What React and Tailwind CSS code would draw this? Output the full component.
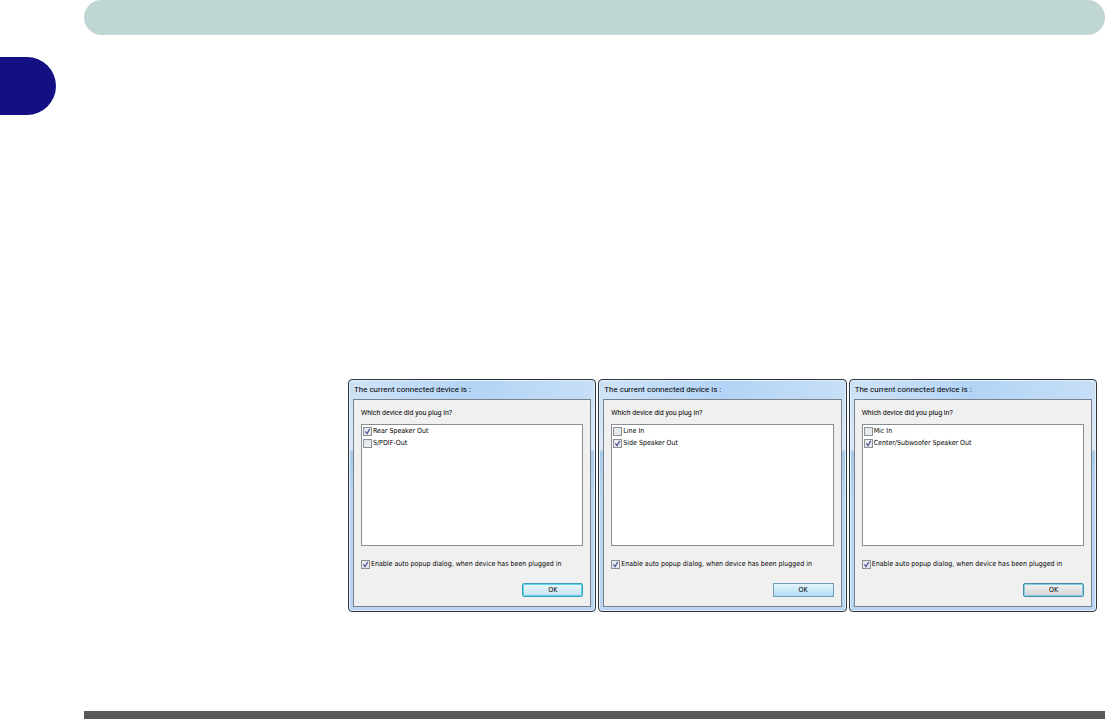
import React from 'react';
import clsx from 'clsx';

const DIALOGS = [
  {
    id: 'rear',
    options: [
      { label: 'Rear Speaker Out', checked: true },
      { label: 'S/PDIF-Out', checked: false },
    ],
    button: 'default',
  },
  {
    id: 'side',
    options: [
      { label: 'Line In', checked: false },
      { label: 'Side Speaker Out', checked: true },
    ],
    button: 'hover',
  },
  {
    id: 'center',
    options: [
      { label: 'Mic In', checked: false },
      { label: 'Center/Subwoofer Speaker Out', checked: true },
    ],
    button: 'focus',
  },
];

const BUTTON_STYLES = {
  default: 'rounded-[2px] border-[#3f9fb8] from-[#eef7fb] to-[#c3e2f1] shadow-[inset_0_0_0_1px_#5fd3f0]',
  hover: 'border-[#6d9db8] from-[#e6f5fd] to-[#b0dcf3]',
  focus: 'rounded-[2px] border-[#4b8ba3] from-[#f2f2f2] to-[#d3d5d6] shadow-[inset_0_0_0_1px_#7fd0e6]',
};

const CheckBox = ({ id, label, defaultChecked }) => (
  <label htmlFor={id} className="flex h-[12px] items-center gap-px whitespace-nowrap">
    <span className="grid shrink-0">
      <input
        id={id}
        type="checkbox"
        defaultChecked={defaultChecked}
        className="peer col-start-1 row-start-1 size-[9px] appearance-none border border-[#8c8f93] bg-[#e6e9ee]"
      />
      <svg
        viewBox="0 0 9 9"
        className="pointer-events-none invisible col-start-1 row-start-1 size-[9px] peer-checked:visible"
      >
        <path d="M2.4 4.3 4 6.6 6.8 1.9" fill="none" stroke="#4f5499" strokeWidth="1.2" />
      </svg>
    </span>
    {label}
  </label>
);

const DeviceDialog = ({ id, options, button }) => (
  <section
    role="dialog"
    aria-labelledby={`${id}-title`}
    className="rounded-[4px] border border-[#30363d] bg-[linear-gradient(to_bottom,#c9def3_0%,#dde9f5_30%,#a9c9e6_31%,#b9d5f1_50%,#b9d5f1_100%)] px-1 pb-1 shadow-[inset_0_0_0_1px_#e0effc]"
  >
    <h2
      id={`${id}-title`}
      className="flex h-[19px] items-center rounded-t-[3px] bg-linear-to-r from-[#cfe3f7] via-[#b3d4f5] to-[#c6def6] px-px pt-px font-['Roboto',sans-serif] text-[8px] leading-[18px] text-black shadow-[inset_0_1px_0_0_#e0effc]"
    >
      The current connected device is :
    </h2>
    <div className="flex flex-col border border-[#77828e] bg-[#f0f0f0] px-[7px] pt-[8px] pb-[9px]">
      <p className="font-['Roboto',sans-serif] text-[7px] leading-[11px]">Which device did you plug in?</p>
      <div className="mt-[5px] h-[122px] border border-[#8a8d91] bg-white px-px">
        {options.map((option, index) => (
          <CheckBox
            key={option.label}
            id={`${id}-option-${index}`}
            label={option.label}
            defaultChecked={option.checked}
          />
        ))}
      </div>
      <div className="mt-[12px]">
        <CheckBox
          id={`${id}-popup`}
          label="Enable auto popup dialog, when device has been plugged in"
          defaultChecked
        />
      </div>
      <button
        type="button"
        className={clsx(
          'mt-[13px] h-[14px] w-[61px] self-end border bg-linear-to-b text-center leading-[11px]',
          BUTTON_STYLES[button],
        )}
      >
        OK
      </button>
    </div>
  </section>
);

const App = () => (
  <div className="flex min-h-screen flex-col bg-white font-['DejaVu_Sans_Condensed','DejaVu_Sans',sans-serif] text-[7px] text-black">
    <header className="mr-px ml-[84px] h-[35px] rounded-full bg-[#c0d6d4]" />
    <div className="mt-[22px] h-[58px] w-[56px] rounded-r-[29px] bg-[#140f82]" />
    <main className="mt-auto mr-[9px] mb-[99px] ml-[348px] grid grid-cols-3 gap-[2px]">
      {DIALOGS.map((dialog) => (
        <DeviceDialog key={dialog.id} {...dialog} />
      ))}
    </main>
    <footer className="mr-px mb-[2px] ml-[84px] h-2 bg-[#595959]" />
  </div>
);

export default App;
